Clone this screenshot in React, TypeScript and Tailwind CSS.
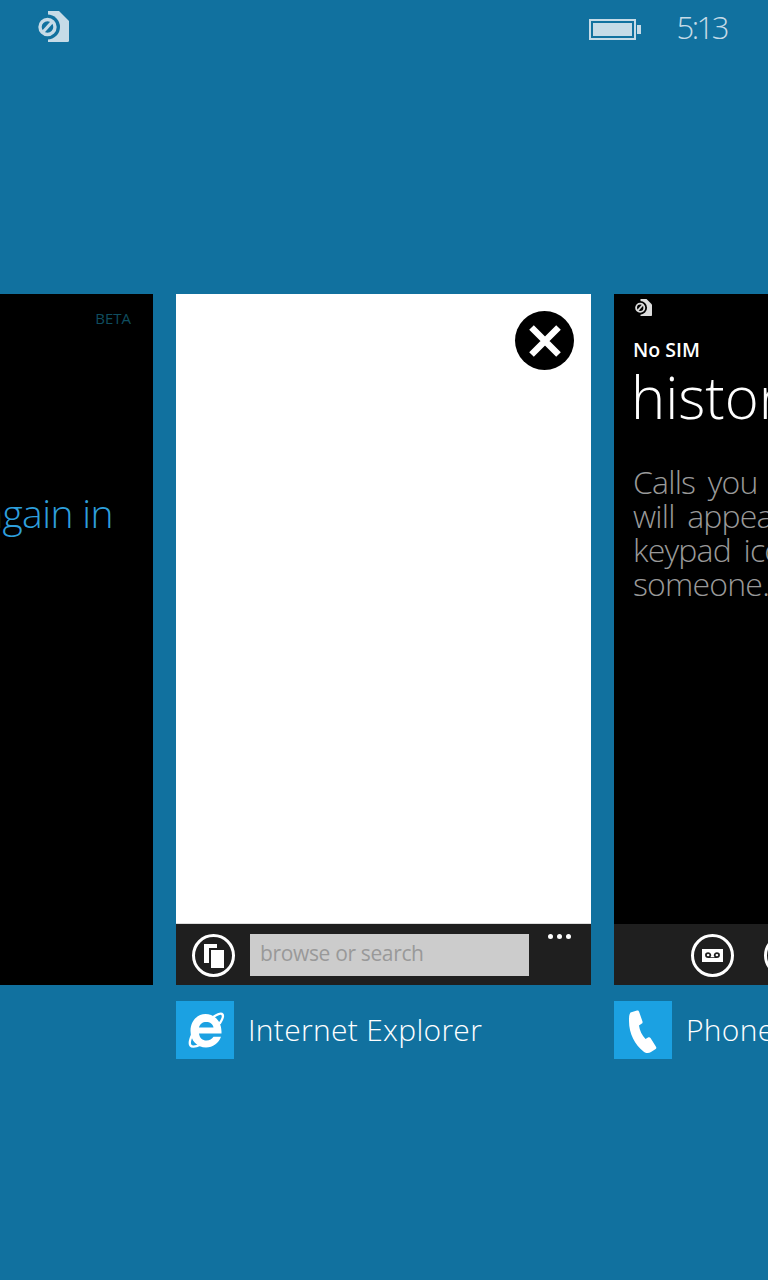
const FONT = "font-['Open_Sans','Noto_Sans',sans-serif]"

function SimIcon({ className, fill, gap }: { className: string; fill: string; gap: string }) {
  return (
    <svg viewBox="0 0 31 31" className={className}>
      <path d="M10 0H21L31 10V29.5Q31 31 29.5 31H10Z" fill={fill} />
      <circle cx="9.5" cy="16" r="12.5" fill={gap} />
      <circle cx="9.5" cy="16" r="7.5" fill="none" stroke={fill} strokeWidth="3.4" />
      <path d="M5 21L14 11" stroke={fill} strokeWidth="3.2" />
    </svg>
  )
}

function RoundButton({ children }: { children?: React.ReactNode }) {
  return (
    <div className="flex h-[43px] w-[43px] shrink-0 items-center justify-center rounded-full border-[3px] border-white">
      {children}
    </div>
  )
}

function IeLogo() {
  return (
    <svg viewBox="0 0 58 58" className="h-[58px] w-[58px]">
      <path
        d="M29.500 13C38 13 45.500 20 45.500 30.500V32.500H23C23.500 37 26.500 39.500 30.500 39.500C33.500 39.500 36 38.200 37.500 35.800H45C42.500 42.500 37 46.500 30 46.500C21 46.500 14.500 39.500 14.500 30C14.500 20.500 21 13 29.500 13ZM23 26.500H37.500C37 23 34 21 30.200 21C26.500 21 23.800 23 23 26.500Z"
        fill="white"
        fillRule="evenodd"
      />
      <path
        d="M38 15.500C42 13 45.500 12 46.500 13.500C47.800 15.500 46 19 44 22M17 32C14 38 13 42.500 14.500 44.500C16 46.500 20.500 45.500 25 43.500"
        fill="none"
        stroke="white"
        strokeWidth="2.400"
        strokeLinecap="round"
      />
    </svg>
  )
}

function PhoneLogo() {
  return (
    <svg viewBox="0 0 58 58" className="h-[58px] w-[58px]">
      <path
        d="M16.500 11.500L23 9.500C24 9.200 24.800 9.800 25 10.500L28.500 20.500C28.800 21.500 28.500 22.300 27.500 22.800L25 24.500C25.500 29 28 34.500 31.500 38L34 36.500C35 36 36 36.200 36.500 37L42 45.800C42.500 46.600 42.400 47.500 41.700 48L37 51C35 52.300 32 52.500 29.500 50.500C21 44 15 32.500 15 20C15 16.500 15 13.500 16.500 11.500Z"
        fill="white"
      />
    </svg>
  )
}

export default function App() {
  return (
    <div className={`flex h-[1280px] w-[768px] flex-col overflow-hidden bg-[#11719f] ${FONT}`}>
      {/* status bar */}
      <div className="flex h-[58px] items-start justify-between pl-[38px] pr-[41px]">
        <SimIcon className="mt-[11px] h-[31px] w-[31px]" fill="#c6dbe7" gap="#11719f" />
        <div className="flex items-center pt-[7px]">
          <div className="flex h-[21px] w-[47px] items-center border-2 border-[#c6dbe7] p-[2px]">
            <div className="h-full w-full bg-[#c6dbe7]" />
          </div>
          <div className="ml-[1px] h-[9px] w-[4px] bg-[#c6dbe7]" />
          <span className="ml-[36px] pb-[4px] text-[31px] leading-[40px] font-light tracking-[-2.5px] text-[#c6dbe7]">5:13</span>
        </div>
      </div>

      {/* task switcher */}
      <div className="mt-[236px] ml-[-262px] flex gap-[23px]">
        <div className="flex w-[415px] shrink-0 flex-col">
          <div className="flex h-[691px] flex-col items-end overflow-hidden bg-black pt-[14px] pr-[22px]">
            <span className="text-[15px] leading-[20px] text-[#0f4d5f]">BETA</span>
            <span className="mt-[160px] pr-[18px] text-[39px] leading-[50px] font-[350] tracking-[-0.6px] whitespace-nowrap text-[#2e9fdc]">
              again in
            </span>
          </div>
        </div>

        <div className="flex w-[415px] shrink-0 flex-col">
          <div className="relative flex h-[691px] flex-col bg-white">
            <div className="absolute top-[17px] right-[17px] flex h-[59px] w-[59px] items-center justify-center rounded-full bg-black">
              <svg viewBox="0 0 32 32" className="h-[32px] w-[32px]">
                <path d="M2.500 2.500L29.500 29.500M29.500 2.500L2.500 29.500" stroke="white" strokeWidth="6.500" strokeLinecap="butt" />
              </svg>
            </div>
            <div className="flex-1 border-b border-[#dddddd]" />
            <div className="flex h-[61px] items-start bg-[#1f1f1f] pt-[10px] pl-[16px]">
              <RoundButton>
                <svg viewBox="0 0 20 24" className="h-[24px] w-[20px]">
                  <path d="M0 0H13V4H5V19H0Z" fill="white" />
                  <rect x="7" y="6" width="13" height="18" fill="white" />
                </svg>
              </RoundButton>
              <div className="ml-[15px] flex h-[42px] w-[279px] items-center bg-[#cccccc] pb-[3px] pl-[10px] text-[21px] tracking-[-0.35px] text-[#999999]">
                browse or search
              </div>
              <div className="ml-[19px] flex gap-[4px]">
                <div className="h-[5px] w-[5px] rounded-full bg-white" />
                <div className="h-[5px] w-[5px] rounded-full bg-white" />
                <div className="h-[5px] w-[5px] rounded-full bg-white" />
              </div>
            </div>
          </div>
          <div className="mt-[16px] flex items-center gap-[14px]">
            <div className="bg-[#1ba1e2]">
              <IeLogo />
            </div>
            <span className="text-[30px] leading-[58px] font-[350] tracking-[0.3px] text-white">Internet Explorer</span>
          </div>
        </div>

        <div className="flex w-[415px] shrink-0 flex-col">
          <div className="flex h-[691px] flex-col overflow-hidden bg-black">
            <div className="flex flex-1 flex-col pt-[5px] pl-[19px]">
              <SimIcon className="ml-[2px] h-[17px] w-[17px]" fill="#dddddd" gap="#000000" />
              <div className="mt-[21px] text-[19.5px] leading-[26px] font-[550] text-white">No SIM</div>
              <div className="mt-[-3px] ml-[-2px] text-[58px] leading-[74px] font-light whitespace-nowrap text-white">history</div>
              <div className="mt-[31px] text-[32px] leading-[34px] font-[350] tracking-[-0.8px] [word-spacing:5px] whitespace-nowrap text-[#999999]">
                <div>Calls you make</div>
                <div>will appear here</div>
                <div>keypad icon</div>
                <div>someone.</div>
              </div>
            </div>
            <div className="flex h-[61px] items-start gap-[30px] bg-[#1f1f1f] pt-[10px] pl-[77px]">
              <RoundButton>
                <svg viewBox="0 0 24 16" className="h-[13px] w-[21px]" preserveAspectRatio="none">
                  <path
                    fillRule="evenodd"
                    d="M0 0H24V16H0ZM7 4A3.500 3.500 0 1 0 7 11H17A3.500 3.500 0 1 0 17 4A3.500 3.500 0 0 0 14.500 10H9.500A3.500 3.500 0 0 0 7 4ZM7 6A1.500 1.500 0 1 1 7 9A1.500 1.500 0 0 1 7 6ZM17 6A1.500 1.500 0 1 1 17 9A1.500 1.500 0 0 1 17 6Z"
                    fill="white"
                  />
                </svg>
              </RoundButton>
              <RoundButton />
            </div>
          </div>
          <div className="mt-[16px] flex items-center gap-[14px]">
            <div className="bg-[#1ba1e2]">
              <PhoneLogo />
            </div>
            <span className="text-[30px] leading-[58px] font-[350] tracking-[0.3px] text-white">Phone</span>
          </div>
        </div>
      </div>
    </div>
  )
}
